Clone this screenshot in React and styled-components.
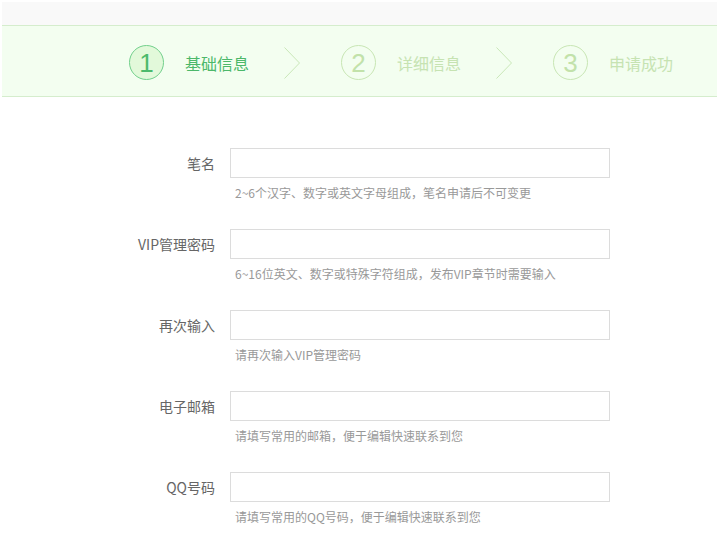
import React from "react";
import styled, { createGlobalStyle } from "styled-components";

const Global = createGlobalStyle`
  html, body { margin: 0; padding: 0; background: #fff; }
  body { font-family: "Noto Sans CJK SC", "Noto Sans", sans-serif; }
  * { box-sizing: border-box; }
`;

const Page = styled.div`
  padding: 2px;
`;

const TopBar = styled.div`
  height: 23px;
  background: #f9f9f9;
`;

const StepBand = styled.div`
  height: 72px;
  background: #f3fef0;
  border-top: 1px solid #d5edcd;
  border-bottom: 1px solid #d5edcd;
  display: flex;
  align-items: center;
  padding: 3px 0 0 127px;
`;

const Step = styled.div`
  display: flex;
  align-items: center;
`;

const Circle = styled.div`
  width: 35px;
  height: 35px;
  border-radius: 50%;
  border: 1px solid ${(p) => (p.$active ? "#72d08c" : "#c8e6b4")};
  background: ${(p) => (p.$active ? "#e2f9da" : "transparent")};
  color: ${(p) => (p.$active ? "#4cba6c" : "#c2e2aa")};
  display: flex;
  align-items: center;
  justify-content: center;
  font-family: "Liberation Sans", Arial, sans-serif;
  font-size: 26px;
  line-height: 1;
  margin-right: 21px;
`;

const StepLabel = styled.span`
  font-size: 16px;
  line-height: 20px;
  color: ${(p) => (p.$active ? "#4cb86a" : "#c6e3b2")};
  width: 64px;
  white-space: nowrap;
`;

const Chevron = styled.svg`
  width: 16px;
  height: 32px;
  margin: 0 41px 0 35px;
  display: block;
  flex: none;
`;

const Form = styled.div`
  padding: 51px 0 0 113px;
`;

const Field = styled.div`
  display: grid;
  grid-template-columns: 100px 380px;
  column-gap: 15px;
  margin-bottom: 26px;
`;

const Label = styled.label`
  text-align: right;
  font-size: 14px;
  line-height: 30px;
  color: #666;
  white-space: nowrap;
`;

const Input = styled.input`
  width: 380px;
  height: 30px;
  border: 1px solid #dcdcdc;
  background: #fff;
  padding: 0 8px;
  font: inherit;
  font-size: 14px;
  outline: none;
`;

const Hint = styled.div`
  grid-column: 2;
  margin-top: 5px;
  padding-left: 5px;
  font-size: 12px;
  line-height: 20px;
  color: #999;
  white-space: nowrap;
`;

const steps = [
  { n: "1", t: "基础信息", active: true },
  { n: "2", t: "详细信息" },
  { n: "3", t: "申请成功" },
];

const fields = [
  { l: "笔名", h: "2~6个汉字、数字或英文字母组成，笔名申请后不可变更" },
  { l: "VIP管理密码", h: "6~16位英文、数字或特殊字符组成，发布VIP章节时需要输入", type: "password" },
  { l: "再次输入", h: "请再次输入VIP管理密码", type: "password" },
  { l: "电子邮箱", h: "请填写常用的邮箱，便于编辑快速联系到您" },
  { l: "QQ号码", h: "请填写常用的QQ号码，便于编辑快速联系到您" },
];

export default function App() {
  return (
    <Page>
      <Global />
      <TopBar />
      <StepBand>
        {steps.map((s, i) => (
          <React.Fragment key={s.n}>
            <Step>
              <Circle $active={s.active}>{s.n}</Circle>
              <StepLabel $active={s.active}>{s.t}</StepLabel>
            </Step>
            {i < steps.length - 1 && (
              <Chevron viewBox="0 0 16 32">
                <polyline points="0.5,0.5 15.5,16 0.5,31.5" fill="none" stroke="#c9e7b8" strokeWidth="1" />
              </Chevron>
            )}
          </React.Fragment>
        ))}
      </StepBand>
      <Form>
        {fields.map((f) => (
          <Field key={f.l}>
            <Label>{f.l}</Label>
            <Input type={f.type || "text"} />
            <Hint>{f.h}</Hint>
          </Field>
        ))}
      </Form>
    </Page>
  );
}
